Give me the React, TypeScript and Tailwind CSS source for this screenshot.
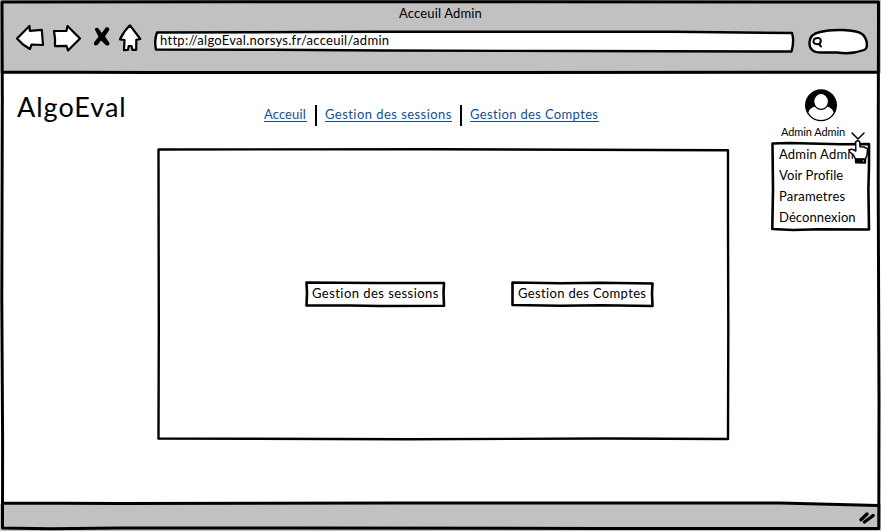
import React from "react";

type Frame = { w: number; h: number; d: string; stroke?: number; fill?: string };

// Hand-drawn outline that lies over the edges of its parent box.
function Sketch({ w, h, d, stroke = 2.6, fill = "none" }: Frame) {
  return (
    <svg
      className="pointer-events-none absolute inset-0 overflow-visible"
      width={w}
      height={h}
      viewBox={`0 0 ${w} ${h}`}
      fill={fill}
      stroke="#000"
      strokeWidth={stroke}
      strokeLinejoin="round"
      strokeLinecap="round"
    >
      <path d={d} />
    </svg>
  );
}

function NavIcons() {
  return (
    <svg
      width="130"
      height="32"
      viewBox="14 21 130 32"
      fill="#fff"
      stroke="#000"
      strokeWidth="2.2"
      strokeLinejoin="round"
      strokeLinecap="round"
      className="shrink-0"
    >
      <path d="M17 37.5 L29.5 25 L29.8 29.8 L41.8 28.8 L43 44 L31.5 43.5 L30 48 L23 43.5 Z" />
      <path d="M54 30 L66.5 29.8 L67.5 25 L80 37.5 L68 49.5 L66.5 44.8 L55 45.2 Q55.5 38 54 30 Z" />
      <path d="M94.8 28.4 Q95 26 98 27 L101.8 32 L106 26.3 Q109.5 25.5 109.3 29 L105 35.5 L109.5 42 Q109.8 45.5 106 44.2 L101 39.5 L97.5 44 Q93.5 45.5 94 41.5 L98.5 35.8 Z" fill="#000" stroke="none" />
      <path d="M130 24.3 L140.3 38 L136.3 38.8 L136.2 48.8 L132.3 48.8 L131.5 45 L128.7 45 L128 48.8 L124 49.2 L124.5 39 L120 38.3 Q123.5 30.5 130 24.3 Z" />
    </svg>
  );
}

function Browser() {
  return (
    <header className="h-[73px] bg-[#c1c1c1]">
      <h1 className="h-[28px] pt-[3px] text-center text-[13px] leading-[20px] tracking-[0.15px]">Acceuil Admin</h1>
      <div className="flex h-[26px] items-center pl-[14px]">
        <div className="-mt-[13px] h-[26px]">
          <NavIcons />
        </div>
        <div className="relative ml-[10px] h-[20px] w-[641px] pl-[6px] text-[13px] leading-[18px]">
          <Sketch w={641} h={20} stroke={2.4} fill="#fff" d="M3 1.5 L220 .8 L520 .8 L638 2 Q640.5 10 637.5 20.5 L420 20 L230 19.5 L120 18.8 L2 18.5 Q0 9 3 1.5Z" />
          <span className="relative tracking-[0.28px]">http://algoEval.norsys.fr/acceuil/admin</span>
        </div>
        <div className="relative ml-[13px] h-[24px] w-[60px]">
          <Sketch w={60} h={24} stroke={2.4} fill="#fff" d="M12 3 C23 0 47 0 54 5 C59 9 61 19 56 21 C48 24 38 25 29 23.5 L15 23.5 C5 24 1 20 1.5 13 C2 7 7 4 12 3Z" />
          <svg className="relative ml-[4px] mt-[8px]" width="12" height="12" viewBox="0 0 12 12" fill="none" stroke="#000" strokeWidth="2" strokeLinecap="round">
            <path d="M3 1.5 Q8 0 8.8 3 Q9 7 5.5 7.3 Q1 7 1.5 4 Q2 2 3 1.5 M7.3 7.3 L9 9.5" />
          </svg>
        </div>
      </div>
    </header>
  );
}

function Account() {
  return (
    <div className="relative w-[110px] pt-[15px]">
      <svg className="ml-[35px] block" width="34" height="34" viewBox="0 0 34 34">
        <circle cx="17" cy="17.2" r="16" fill="#000" />
        <path d="M4.3 24.5 C5.5 21 8 19.3 11 18.6 Q17 23.5 23 18.6 C26 19.3 28.5 21 29.7 24.5 A14.6 14.6 0 0 1 4.3 24.5Z" fill="#fff" />
        <ellipse cx="17.1" cy="13.4" rx="7.4" ry="8" fill="#fff" stroke="#000" strokeWidth="1.2" />
      </svg>
      <div className="ml-[12px] mt-[2px] h-[16px] whitespace-nowrap text-[11px] leading-[16px] tracking-[-0.1px]">Admin Admin</div>
      <div className="relative ml-[2px] mt-[1px] h-[90px] w-[99px] pl-[8px] pt-[3px] text-[13px] leading-[21px]">
        <Sketch w={99} h={90} fill="#fff" d="M1.5 2.5 L18 2 L70 3.2 L98 3 L98 25 L97.4 48 L98 88.5 L48 88.3 L22 89 L1.3 88 L2 49Z" />
        <ul className="relative whitespace-nowrap">
          <li className="tracking-[0.2px]">Admin Admin</li>
          <li className="tracking-[0.1px]">Voir Profile</li>
          <li className="tracking-[0.2px]">Parametres</li>
          <li className="tracking-[0.1px]">Déconnexion</li>
        </ul>
      </div>
      <svg className="absolute left-[79px] top-[57px]" width="26" height="36" viewBox="848 131 26 36" fill="none" stroke="#000" strokeWidth="1.5" strokeLinejoin="round" strokeLinecap="round">
        <path d="M852 134 L858 140 L864 134" />
        <path d="M855.6 143 Q857.8 140.6 859.8 143 L860 147.8 L864 148 L867.6 149.8 L867 156 L865.5 160 L855.5 160 L853.5 156 L849.2 152.5 Q849.5 149.5 853 150.5 L855.8 152 Z" fill="#fff" />
        <path d="M855.5 160.5 L865.5 160.5 L865.3 164 L855.7 163.8Z M862.8 162 h.6" fill="#000" />
        <path d="M863.2 162 h.4" stroke="#fff" strokeWidth="1" />
      </svg>
    </div>
  );
}

function Action({ label, w, tracking, d }: { label: string; w: number; tracking: string; d: string }) {
  return (
    <button className="relative h-[26px] px-[7px] text-left text-[13px] leading-[22px]" style={{ width: w }}>
      <Sketch w={w} h={26} d={d} stroke={2.6} fill="#fff" />
      <span className={`relative -top-px whitespace-nowrap ${tracking}`}>{label}</span>
    </button>
  );
}

export default function App() {
  return (
    <div className="relative flex h-[531px] w-[881px] flex-col overflow-hidden bg-white font-['Lato','Noto_Sans',sans-serif] text-black">
      <Browser />
      <main className="h-[431px] shrink-0">
        <div className="flex h-[75px]">
          <div className="w-[264px] pl-[17px] pt-[17px] text-[27px] leading-[34px] tracking-[1px]">AlgoEval</div>
          <nav className="flex w-[505px] items-start whitespace-nowrap pt-[32px] text-[13px] leading-[20px] text-[#134f96]">
            <a className="h-[17px] w-[43px] border-b border-[#134f96] leading-[18px] tracking-[0.1px]">Acceuil</a>
            <span className="ml-[8px] h-[21px] w-[2px] bg-black" />
            <a className="ml-[8px] h-[17px] w-[127px] border-b border-[#134f96] leading-[18px] tracking-[0.45px]">Gestion des sessions</a>
            <span className="ml-[8px] h-[21px] w-[2px] bg-black" />
            <a className="ml-[8px] h-[17px] w-[129px] border-b border-[#134f96] leading-[18px] tracking-[0.35px]">Gestion des Comptes</a>
          </nav>
          <Account />
        </div>
        <section className="relative ml-[157px] flex h-[293px] w-[573px] items-start pl-[148px] pt-[133px]">
          <Sketch w={573} h={293} stroke={2.4} d="M1.5 1.5 L280 1.2 L571 2.2 L571 80 L571.3 180 L571 291 L450 290.5 L250 291.3 L1.5 290.5 L1.8 180Z" />
          <Action label="Gestion des sessions" w={140} tracking="tracking-[0.45px]" d="M1.5 1.5 L70 2 L139 2 L138.5 12 L139 24.8 L75 25 L45 24.5 L1.5 24.5 L2 12Z" />
          <div className="w-[66px]" />
          <Action label="Gestion des Comptes" w={143} tracking="tracking-[0.35px]" d="M1.5 1.5 L50 2.2 L90 1.8 L141.5 2.5 L141 12 L141.5 25 L90 24.3 L50 24.8 L1.5 24Z" />
        </section>
      </main>
      <footer className="flex h-[27px] justify-end bg-[#c1c1c1] pr-[5px] pt-[7px]">
        <svg width="18" height="14" viewBox="858 511 18 14" fill="none" stroke="#000" strokeWidth="3.4" strokeLinecap="round">
          <path d="M861 519.8 L867 514 M864.5 522 L873.2 515.5" />
        </svg>
      </footer>
      <Sketch w={881} h={531} stroke={3} d="M2 2 L440 1.7 L878.5 2 L878.2 180 L879 400 L878.8 528.5 L600 528.5 L300 528 L120 528 L50 528.7 L2.5 528 L2.6 440 L1.8 300 L2.3 100Z M2.5 72 L150 72.6 L480 72.5 L878 72.3 M2.5 503 L120 503.5 L400 503 L780 503 L878 505.5" />
    </div>
  );
}
